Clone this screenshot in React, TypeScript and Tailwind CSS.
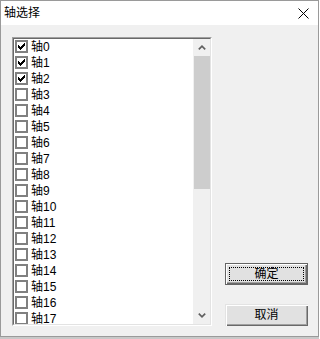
import React from "react";

const items = Array.from({ length: 18 }, (_, i) => i);
const checked = new Set([0, 1, 2]);

function CheckMark() {
  const cols = [2, 3, 4, 3, 2, 1, 0];
  return (
    <svg width="7" height="7" viewBox="0 0 7 7" shapeRendering="crispEdges" className="block">
      {cols.map((y, x) => (
        <rect key={x} x={x} y={y} width="1" height="3" fill="#000" />
      ))}
    </svg>
  );
}

function Box({ on }: { on: boolean }) {
  return (
    <div className="w-[13px] h-[13px] border-2 border-[#808080] bg-white flex items-center justify-center shrink-0">
      {on && <CheckMark />}
    </div>
  );
}

function Chevron({ up }: { up: boolean }) {
  return (
    <svg width="8" height="5" viewBox="0 0 8 5" className="block">
      <path
        d={up ? "M0.8 4.4 L4 1.2 L7.2 4.4" : "M0.8 0.6 L4 3.8 L7.2 0.6"}
        stroke="#606060"
        strokeWidth="1.7"
        fill="none"
      />
    </svg>
  );
}

export default function App() {
  return (
    <div className="w-[319px] h-[339px] bg-[#f0f0f0] flex flex-col font-['Liberation_Sans','Noto_Sans_CJK_SC',sans-serif] text-[12px] text-black overflow-hidden">
      <div className="h-[337px] border border-[#9a9a9a] flex flex-col">
        {/* title bar */}
        <div className="h-[24px] bg-white flex items-center justify-between pl-[3px] pr-[9px]">
          <span className="leading-[16px]">轴选择</span>
          <svg width="11" height="11" viewBox="0 0 11 11" className="block">
            <path d="M0.5 0.5 L10.5 10.5 M10.5 0.5 L0.5 10.5" stroke="#000" strokeWidth="1" />
          </svg>
        </div>
        {/* body */}
        <div className="flex pt-[12px] pl-[11px]">
          {/* listbox */}
          <div className="w-[200px] h-[289px] border-t border-l border-[#a0a0a0] border-b-white border-r-white border-b border-r">
            <div className="w-full h-full border-t border-l border-t-[#696969] border-l-[#696969] border-b border-r border-b-[#e3e3e3] border-r-[#e3e3e3] bg-white flex">
              <div className="w-[179px] h-full overflow-hidden">
                {items.map((i) => (
                  <div key={i} className="h-[16px] flex items-start pl-[1px] pt-[1px]">
                    <Box on={checked.has(i)} />
                    <span className="ml-[3px] leading-[14px]">轴{i}</span>
                  </div>
                ))}
              </div>
              <div className="w-[17px] h-full bg-[#f0f0f0] flex flex-col">
                <div className="h-[17px] flex items-center justify-center">
                  <Chevron up />
                </div>
                <div className="flex-1">
                  <div className="h-[133px] w-[16px] ml-[1px] bg-[#cdcdcd]" />
                </div>
                <div className="h-[17px] flex items-center justify-center">
                  <Chevron up={false} />
                </div>
              </div>
            </div>
          </div>
          {/* buttons */}
          <div className="ml-[13px] w-[83px] flex flex-col">
            <div className="mt-[226px] h-[22px] border border-[#646464] bg-[#e1e1e1] shadow-[inset_1px_1px_0_#ffffff,inset_-1px_-1px_0_#696969,inset_-2px_-2px_0_#a0a0a0] p-[3px]">
              <div className="w-full h-full border border-dotted border-black flex items-center justify-center leading-[14px]">
                确定
              </div>
            </div>
            <div className="mt-[19px] h-[22px] bg-[#e1e1e1] shadow-[inset_1px_1px_0_#e3e3e3,inset_2px_2px_0_#ffffff,inset_-1px_-1px_0_#696969,inset_-2px_-2px_0_#a0a0a0] flex items-center justify-center leading-[14px]">
              取消
            </div>
          </div>
        </div>
      </div>
      <div className="h-[2px] bg-[#c8c8c8]" />
    </div>
  );
}
